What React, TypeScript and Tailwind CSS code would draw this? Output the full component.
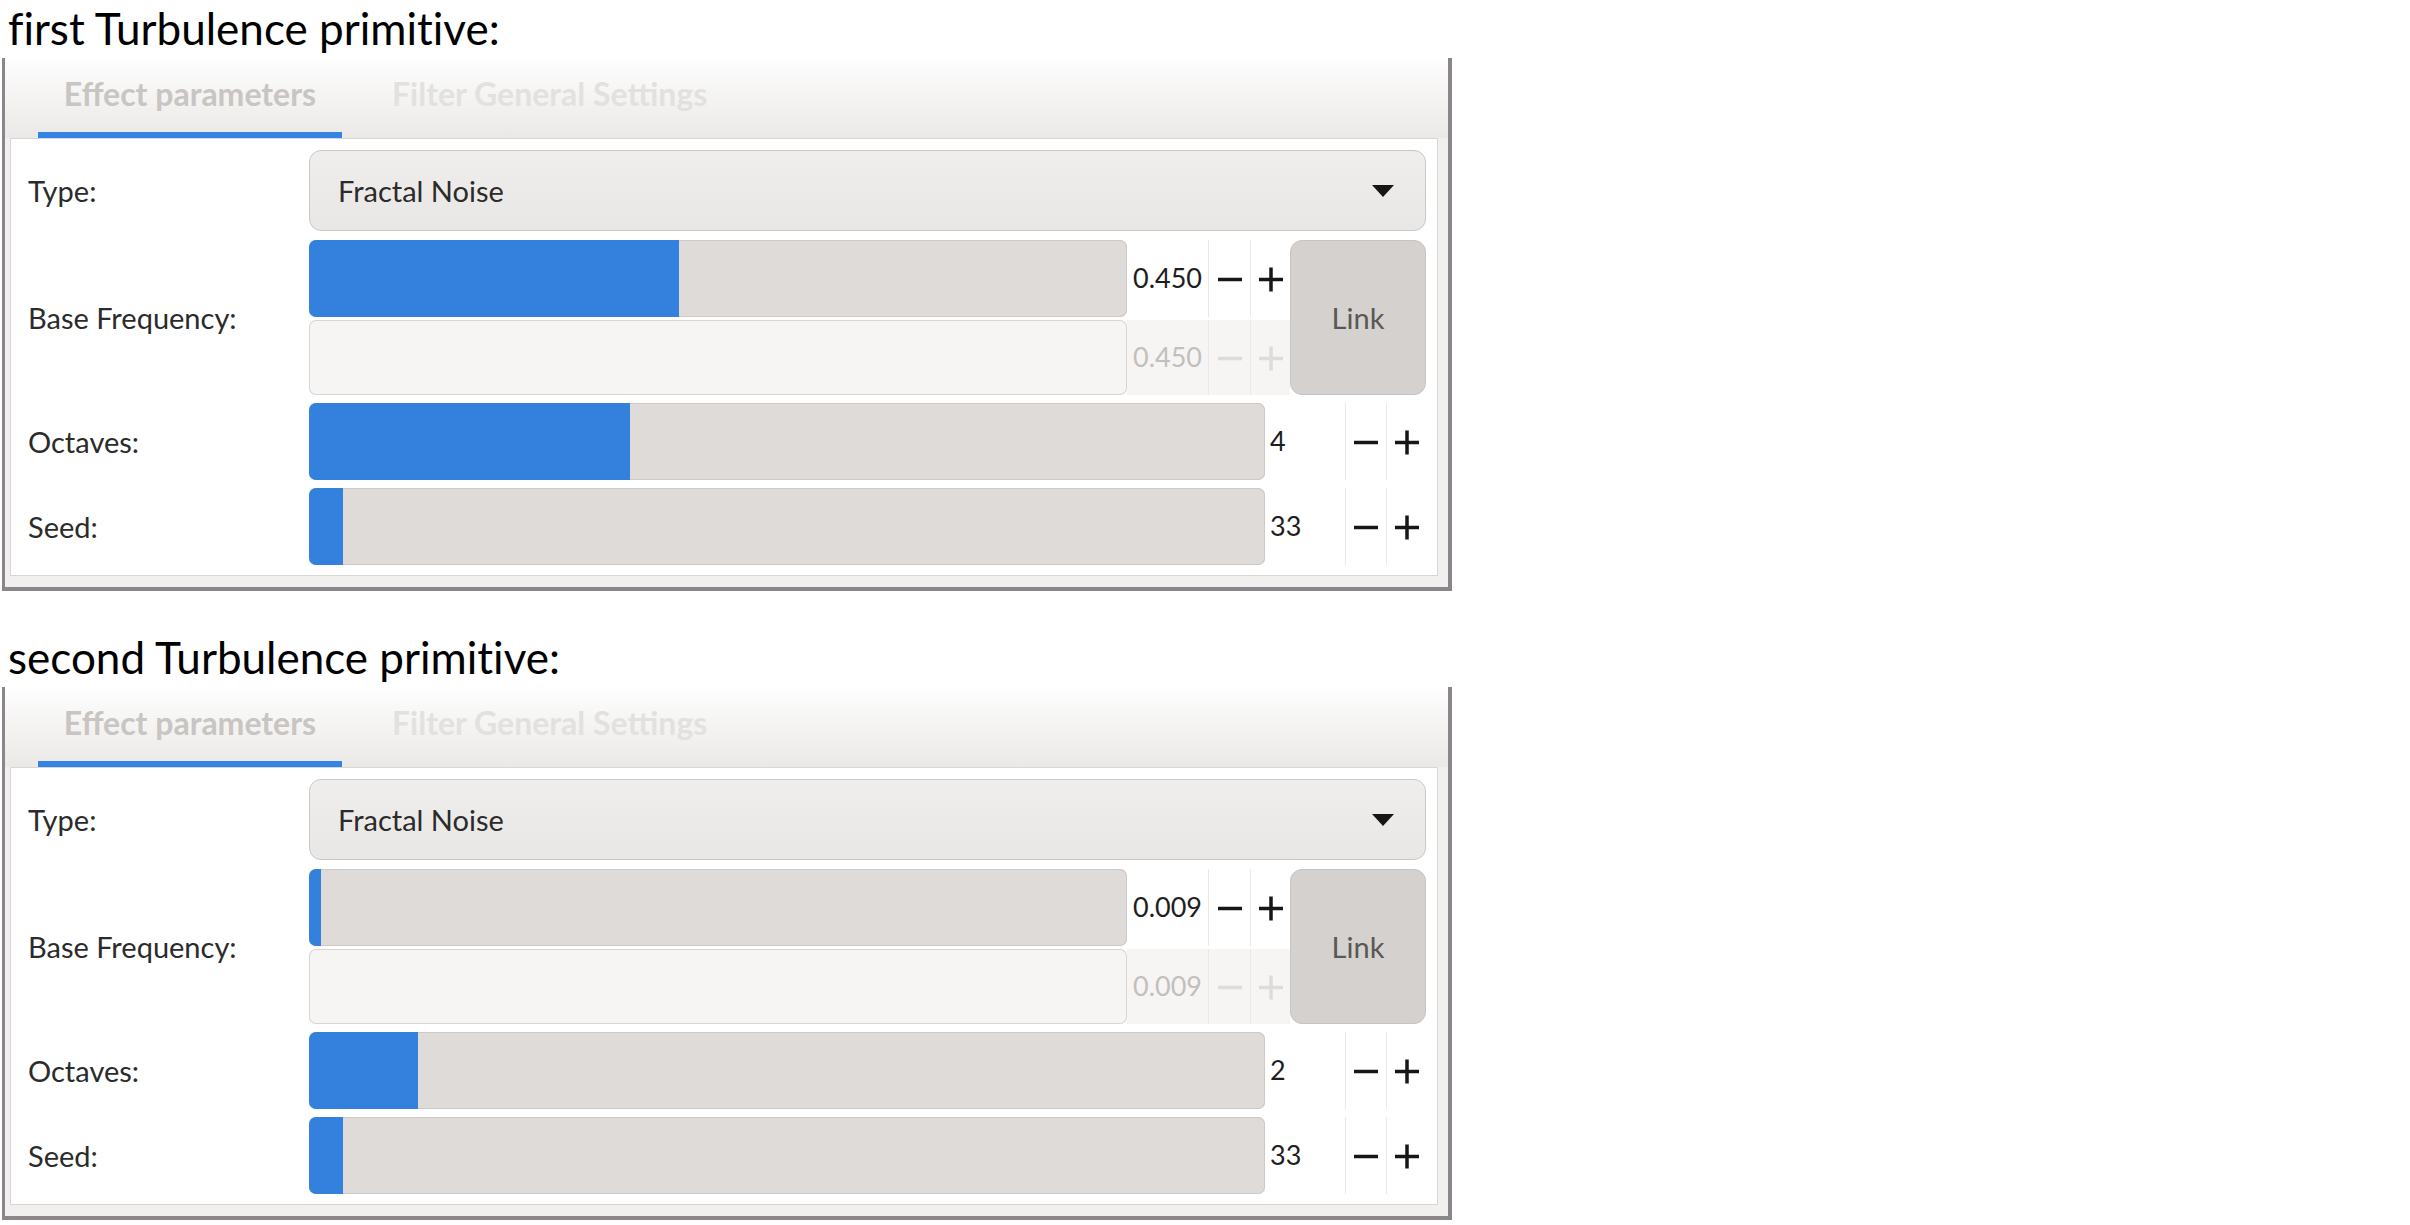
import React from 'react';

interface Row {
  label: string;
  value: string;
  fill: number;
}

interface TurbulenceProps {
  title: string;
  freq: string;
  freqFill: number;
  octaves: Row;
  seed: Row;
}

const Minus = ({ dim }: { dim?: boolean }) => (
  <svg width="26" height="26" viewBox="0 0 26 26">
    <path d="M1 13.5h24" stroke={dim ? '#dedbd9' : '#161616'} strokeWidth="3.5" />
  </svg>
);

const Plus = ({ dim }: { dim?: boolean }) => (
  <svg width="26" height="26" viewBox="0 0 26 26">
    <path d="M1 13.5h24M13 1.5v24" stroke={dim ? '#dedbd9' : '#161616'} strokeWidth="3.5" />
  </svg>
);

const Slider = ({ fill, disabled }: { fill: number; disabled?: boolean }) => (
  <div
    className={`relative h-full overflow-hidden rounded-[7px] ${
      disabled
        ? 'bg-[#f6f5f4] shadow-[inset_0_0_0_1px_#d8d5d3]'
        : 'bg-[#dedbd9] shadow-[inset_0_0_0_1px_#cdc9c7]'
    }`}
  >
    {fill > 0 && <div className="absolute inset-y-0 left-0 bg-[#3381dd]" style={{ width: fill }} />}
  </div>
);

const StepButtons = ({ dim, minusW, plusW }: { dim?: boolean; minusW: string; plusW: string }) => (
  <>
    <div className={`${minusW} flex h-full items-center justify-center border-l border-[#ebe9e7]`}>
      <Minus dim={dim} />
    </div>
    <div className={`${plusW} flex h-full items-center justify-center border-l border-[#ebe9e7]`}>
      <Plus dim={dim} />
    </div>
  </>
);

const SimpleRow = ({ row }: { row: Row }) => (
  <div className="grid h-[77px] grid-cols-[281px_1fr] items-center">
    <div className="text-[29px] text-[#2b2b2b]">{row.label}</div>
    <div className="flex h-full">
      <div className="h-full w-[956px]">
        <Slider fill={row.fill} />
      </div>
      <div className="flex h-full w-[80px] items-center pl-[5px] text-[27px] text-[#1e1e1e]">{row.value}</div>
      <StepButtons minusW="w-[41px]" plusW="w-[40px]" />
    </div>
  </div>
);

const TurbulencePanel = ({ title, freq, freqFill, octaves, seed }: TurbulenceProps) => (
  <div className="w-[1452px]">
    <div className="h-[58px] pl-[8px] text-[44px] leading-[56px] text-black [font-variant-ligatures:none]">
      {title}
    </div>

    <div className="ml-[2px] flex h-[533px] w-[1450px] flex-col border-b-[4px] border-l-[3px] border-r-[4px] border-[#8b868a] bg-[#f1f0ef]">
      {/* tabs */}
      <div className="flex h-[80px] bg-gradient-to-b from-[#fefefe] to-[#ebe9e7] pl-[33px]">
        <div className="flex w-[304px] flex-col">
          <div className="flex flex-1 items-center justify-center pb-[3px] text-[32px] font-bold text-[#c8c5c3]">
            Effect parameters
          </div>
          <div className="h-[6px] bg-[#3584e4]" />
        </div>
        <div className="ml-[50px] flex items-center pb-[9px] text-[32px] font-bold text-[#e3e1df]">
          Filter General Settings
        </div>
      </div>

      {/* content */}
      <div className="ml-[5px] mr-[10px] flex h-[438px] flex-col gap-[8px] border border-[#d9d6d4] bg-white pb-[10px] pl-[17px] pr-[11px] pt-[11px]">
        <div className="mb-[1px] grid h-[81px] grid-cols-[281px_1fr] items-center">
          <div className="text-[29px] text-[#2b2b2b]">Type:</div>
          <div className="flex h-full items-center justify-between rounded-[12px] border border-[#cbc7c5] bg-gradient-to-b from-[#f0eeec] to-[#e9e7e5] pl-[28px] pr-[31px]">
            <span className="text-[29px] text-[#2b2b2b]">Fractal Noise</span>
            <svg width="22" height="12" viewBox="0 0 22 12">
              <path d="M0 0h22L11 12z" fill="#161616" />
            </svg>
          </div>
        </div>

        <div className="grid h-[155px] grid-cols-[281px_1fr] items-center">
          <div className="text-[29px] text-[#2b2b2b]">Base Frequency:</div>
          <div className="flex h-full">
            <div className="flex w-[981px] flex-col gap-[3px]">
              <div className="flex h-[77px]">
                <div className="h-full w-[818px]">
                  <Slider fill={freqFill} />
                </div>
                <div className="flex h-full w-[81px] items-center pl-[6px] text-[27px] text-[#1e1e1e]">{freq}</div>
                <StepButtons minusW="w-[42px]" plusW="w-[40px]" />
              </div>
              <div className="flex h-[75px]">
                <div className="h-full w-[818px]">
                  <Slider fill={0} disabled />
                </div>
                <div className="flex h-full flex-1 bg-[#f6f5f4]">
                  <div className="flex h-full w-[81px] items-center pl-[6px] text-[27px] text-[#c2bfbd]">{freq}</div>
                  <StepButtons dim minusW="w-[42px]" plusW="w-[40px]" />
                </div>
              </div>
            </div>
            <div className="flex h-full w-[136px] items-center justify-center rounded-[12px] border border-[#c6c3c1] bg-[#d4d1cf] text-[29px] text-[#5a5856]">
              Link
            </div>
          </div>
        </div>

        <SimpleRow row={octaves} />
        <SimpleRow row={seed} />
      </div>
    </div>
  </div>
);

export default function App() {
  return (
    <div className="min-h-screen bg-white font-['Lato',sans-serif]">
      <TurbulencePanel
        title="first Turbulence primitive:"
        freq="0.450"
        freqFill={370}
        octaves={{ label: 'Octaves:', value: '4', fill: 321 }}
        seed={{ label: 'Seed:', value: '33', fill: 34 }}
      />
      <div className="mt-[38px]">
        <TurbulencePanel
          title="second Turbulence primitive:"
          freq="0.009"
          freqFill={12}
          octaves={{ label: 'Octaves:', value: '2', fill: 109 }}
          seed={{ label: 'Seed:', value: '33', fill: 34 }}
        />
      </div>
    </div>
  );
}
